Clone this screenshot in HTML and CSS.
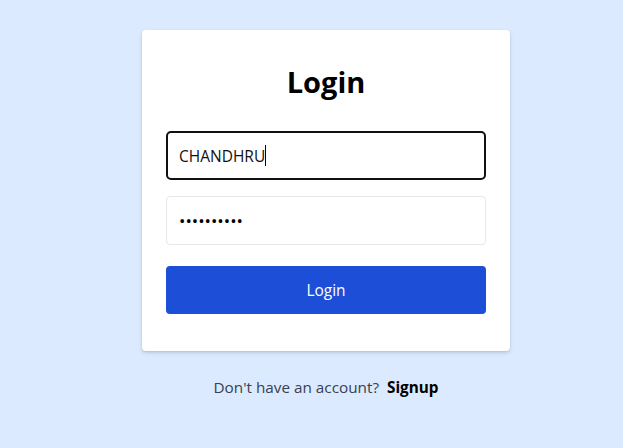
FILE: index.html
```html
<!DOCTYPE html>
<html>
<head>
<meta charset="utf-8">
<link rel="stylesheet" href="styles.css">
</head>
<body>
<main class="page">
  <form class="card">
    <h1 class="title">Login</h1>
    <div class="field field-focused"><span class="field-text">CHANDHRU</span><span class="caret"></span></div>
    <input class="field field-password" type="password" value="1234567890">
    <button class="btn" type="button">Login</button>
  </form>
  <p class="signup">Don't have an account? <a class="signup-link">Signup</a></p>
</main>
</body>
</html>
```

FILE: styles.css
```css
html, body {
  margin: 0;
  padding: 0;
}
body {
  background: #dbeafe;
  font-family: "Open Sans", "Noto Sans", sans-serif;
  color: #111827;
}
.page {
  display: flex;
  flex-direction: column;
  align-items: center;
  padding-top: 30px;
  padding-left: 29px;
}
.card {
  width: 368px;
  box-sizing: border-box;
  background: #ffffff;
  border-radius: 4px;
  box-shadow: 0 2px 4px rgba(0, 0, 0, 0.12), 0 1px 2px rgba(0, 0, 0, 0.08);
  padding: 34px 24px 37px;
  display: flex;
  flex-direction: column;
}
.title {
  margin: 0 0 31px;
  font-size: 29px;
  line-height: 36px;
  font-weight: 700;
  text-align: center;
  color: #000;
}
.field {
  box-sizing: border-box;
  height: 49px;
  width: 100%;
  border: 1px solid #e5e7eb;
  border-radius: 4px;
  padding: 0 12px;
  font-family: inherit;
  font-size: 15.5px;
  color: #111;
  background: #fff;
  outline: none;
  display: flex;
  align-items: center;
}
.field-focused {
  border: 2px solid #111;
  border-radius: 5px;
  height: 49px;
  padding-left: 11px;
  margin-bottom: 16px;
}
.caret {
  width: 1px;
  height: 21px;
  background: #000;
}
.field-password {
  font-size: 17px;
  margin-bottom: 21px;
  color: #000;
}
.btn {
  height: 48px;
  width: 100%;
  border: none;
  border-radius: 4px;
  background: #1d4ed8;
  color: #fff;
  font-family: inherit;
  font-size: 15.5px;
}
.signup {
  margin: 26px 0 0;
  font-size: 15.3px;
  color: #374151;
}
.signup-link {
  margin-left: 4px;
  font-weight: 700;
  color: #000;
}
```
